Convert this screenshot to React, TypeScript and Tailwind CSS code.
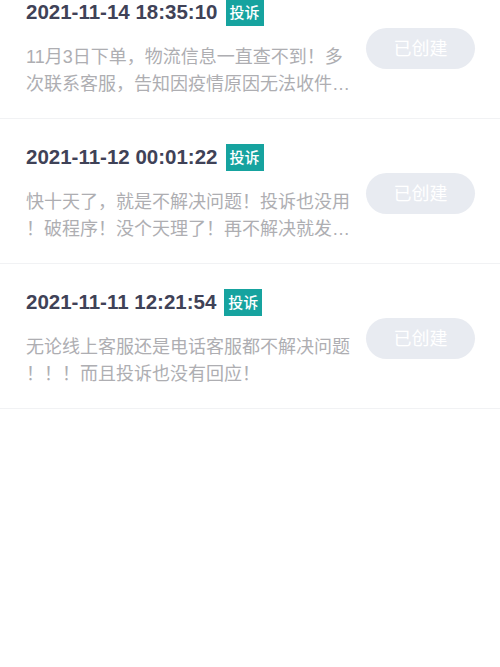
import React from "react";

const complaints = [
  {
    time: "2021-11-14 18:35:10",
    content:
      "11月3日下单，物流信息一直查不到！多次联系客服，告知因疫情原因无法收件，一直拖着没有任何处理结果。",
  },
  {
    time: "2021-11-12 00:01:22",
    content:
      "快十天了，就是不解决问题！投诉也没用！破程序！没个天理了！再不解决就发到网上让大家都看看！",
  },
  {
    time: "2021-11-11 12:21:54",
    content: "无论线上客服还是电话客服都不解决问题！！！而且投诉也没有回应！",
  },
];

export default function App() {
  return (
    <div
      className="min-h-[667px] bg-white overflow-hidden"
      style={{ fontFamily: '"Liberation Sans", "Noto Sans CJK SC", sans-serif' }}
    >
      <div className="-mt-[26px] flex flex-col">
        {complaints.map((item) => (
          <div
            key={item.time}
            className="flex items-center gap-[15px] pl-[26px] pr-[26px] pt-[25px] pb-[20px] border-b border-[#f1f2f4]"
          >
            <div className="w-[325px] shrink-0">
              <div className="flex items-center h-[27px]">
                <span className="text-[20.5px] leading-none font-bold text-[#3f4257]">
                  {item.time}
                </span>
                <span className="ml-[8px] h-[27px] px-[4px] flex items-center bg-[#16a39f] text-white text-[15px] font-medium leading-none">
                  投诉
                </span>
              </div>
              <p className="mt-[18px] text-[18px] leading-[27px] text-[#aeaeb2] line-clamp-2 [line-break:anywhere]">
                {item.content}
              </p>
            </div>
            <button className="w-[109px] h-[41px] shrink-0 rounded-full bg-[#e8ebf1] text-white text-[18px] leading-none">
              已创建
            </button>
          </div>
        ))}
      </div>
    </div>
  );
}
